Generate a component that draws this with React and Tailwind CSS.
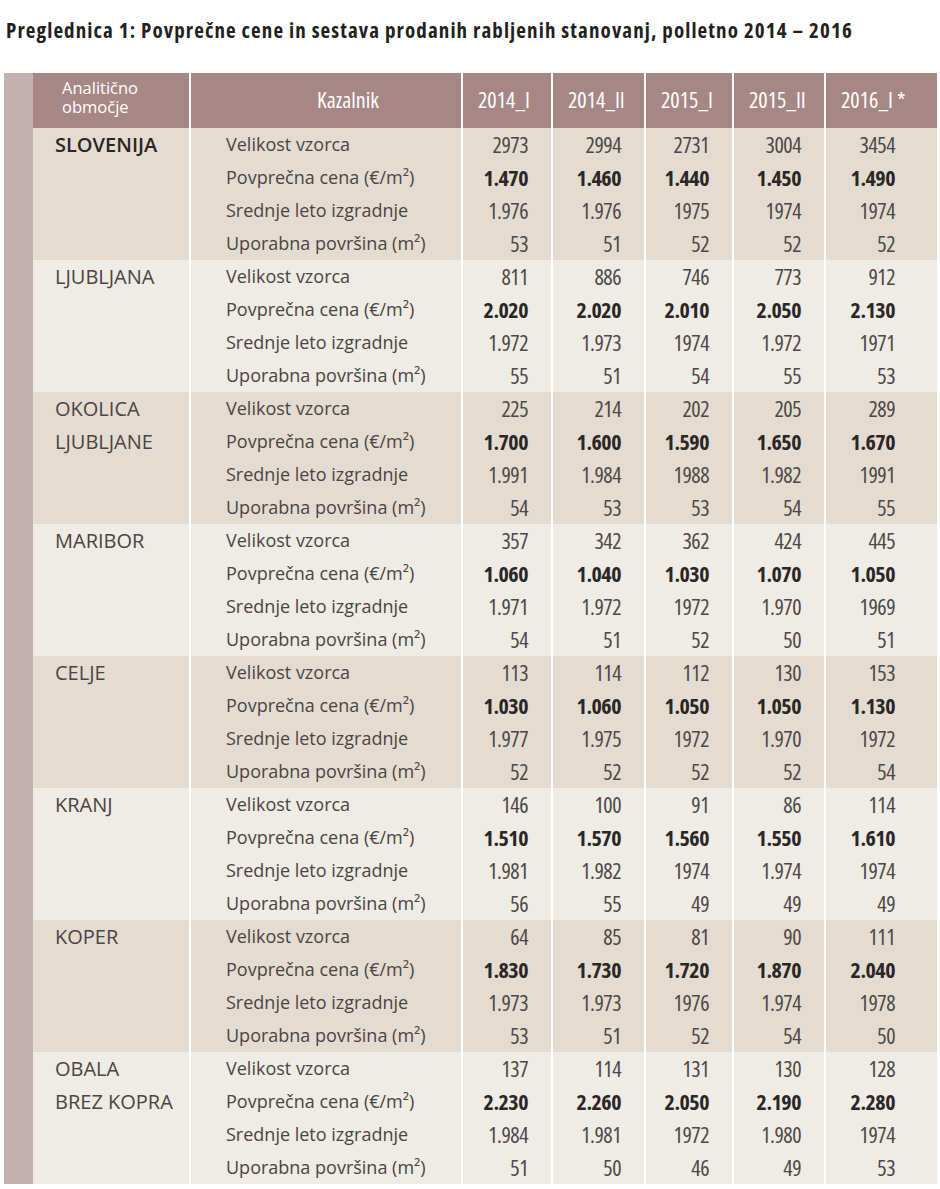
import React from 'react';

const years = ['2014_I', '2014_II', '2015_I', '2015_II', '2016_I *'];
const labels = [
  'Velikost vzorca',
  'Povprečna cena (€/m²)',
  'Srednje leto izgradnje',
  'Uporabna površina (m²)',
];

const groups = [
  {
    area: ['SLOVENIJA'],
    bold: true,
    rows: [
      ['2973', '2994', '2731', '3004', '3454'],
      ['1.470', '1.460', '1.440', '1.450', '1.490'],
      ['1.976', '1.976', '1975', '1974', '1974'],
      ['53', '51', '52', '52', '52'],
    ],
  },
  {
    area: ['LJUBLJANA'],
    rows: [
      ['811', '886', '746', '773', '912'],
      ['2.020', '2.020', '2.010', '2.050', '2.130'],
      ['1.972', '1.973', '1974', '1.972', '1971'],
      ['55', '51', '54', '55', '53'],
    ],
  },
  {
    area: ['OKOLICA', 'LJUBLJANE'],
    rows: [
      ['225', '214', '202', '205', '289'],
      ['1.700', '1.600', '1.590', '1.650', '1.670'],
      ['1.991', '1.984', '1988', '1.982', '1991'],
      ['54', '53', '53', '54', '55'],
    ],
  },
  {
    area: ['MARIBOR'],
    rows: [
      ['357', '342', '362', '424', '445'],
      ['1.060', '1.040', '1.030', '1.070', '1.050'],
      ['1.971', '1.972', '1972', '1.970', '1969'],
      ['54', '51', '52', '50', '51'],
    ],
  },
  {
    area: ['CELJE'],
    rows: [
      ['113', '114', '112', '130', '153'],
      ['1.030', '1.060', '1.050', '1.050', '1.130'],
      ['1.977', '1.975', '1972', '1.970', '1972'],
      ['52', '52', '52', '52', '54'],
    ],
  },
  {
    area: ['KRANJ'],
    rows: [
      ['146', '100', '91', '86', '114'],
      ['1.510', '1.570', '1.560', '1.550', '1.610'],
      ['1.981', '1.982', '1974', '1.974', '1974'],
      ['56', '55', '49', '49', '49'],
    ],
  },
  {
    area: ['KOPER'],
    rows: [
      ['64', '85', '81', '90', '111'],
      ['1.830', '1.730', '1.720', '1.870', '2.040'],
      ['1.973', '1.973', '1976', '1.974', '1978'],
      ['53', '51', '52', '54', '50'],
    ],
  },
  {
    area: ['OBALA', 'BREZ KOPRA'],
    rows: [
      ['137', '114', '131', '130', '128'],
      ['2.230', '2.260', '2.050', '2.190', '2.280'],
      ['1.984', '1.981', '1972', '1.980', '1974'],
      ['51', '50', '46', '49', '53'],
    ],
  },
];

const cols = 'grid grid-cols-[156px_270px_88px_91px_86px_90px_111px] gap-x-[2px]';
const sans = "font-['Open_Sans','Noto_Sans',sans-serif]";
const narrow = `${sans} [font-stretch:75%]`;

function Group({ group, dark }) {
  const bg = dark ? 'bg-[#e5dcd1]' : 'bg-[#efebe5]';
  return (
    <div className={cols}>
      <div className={`${bg} pl-[22px] ${sans} [font-stretch:91%] text-[20px] text-[#4a4542]`}>
        {group.area.map((a) => (
          <div key={a} className={`h-[33px] flex items-center ${group.bold ? 'font-semibold text-[#2a2624]' : ''}`}>
            {a}
          </div>
        ))}
      </div>
      <div className={`${bg} pl-[35px] ${sans} [font-stretch:91%] text-[18px] text-[#4a4542]`}>
        {labels.map((l) => (
          <div key={l} className="h-[33px] flex items-center">{l}</div>
        ))}
      </div>
      {years.map((y, ci) => (
        <div
          key={y}
          className={`${bg} ${ci === 4 ? 'pr-[42px]' : 'pr-[23px]'} ${narrow} text-[22px] tracking-[-0.5px]`}
        >
          {group.rows.map((r, ri) => (
            <div
              key={ri}
              className={`h-[33px] flex items-center justify-end ${
                ri === 1 ? 'font-bold text-[#2a2726]' : 'text-[#4d4845]'
              }`}
            >
              {r[ci]}
            </div>
          ))}
        </div>
      ))}
    </div>
  );
}

export default function App() {
  return (
    <div className="w-[940px] h-[1189px] bg-white overflow-hidden">
      <h1
        className={`${narrow} font-bold text-[21px] tracking-[1.1px] text-[#231f1e] pl-[6px] pt-[15px] h-[73px] whitespace-nowrap`}
      >
        Preglednica 1: Povprečne cene in sestava prodanih rabljenih stanovanj, polletno 2014 – 2016
      </h1>
      <div className="flex">
        <div className="ml-[4px] w-[29px] bg-[#c4b0b1]" />
        <div className="flex flex-col">
          <div className={`${cols} h-[55px] ${sans} text-white`}>
            <div className="bg-[#a68786] pl-[29px] pt-[5px] text-[16.5px] leading-[19px] [font-stretch:91%]">
              <div>Analitično</div>
              <div>območje</div>
            </div>
            <div className="bg-[#a68786] pl-[126px] flex items-end pb-[12px] text-[22px] [font-stretch:75%]">
              Kazalnik
            </div>
            {years.map((y) => (
              <div key={y} className="bg-[#a68786] pl-[15px] flex items-end pb-[12px] text-[22px] [font-stretch:75%]">
                {y}
              </div>
            ))}
          </div>
          {groups.map((g, i) => (
            <Group key={i} group={g} dark={i % 2 === 0} />
          ))}
        </div>
      </div>
    </div>
  );
}
